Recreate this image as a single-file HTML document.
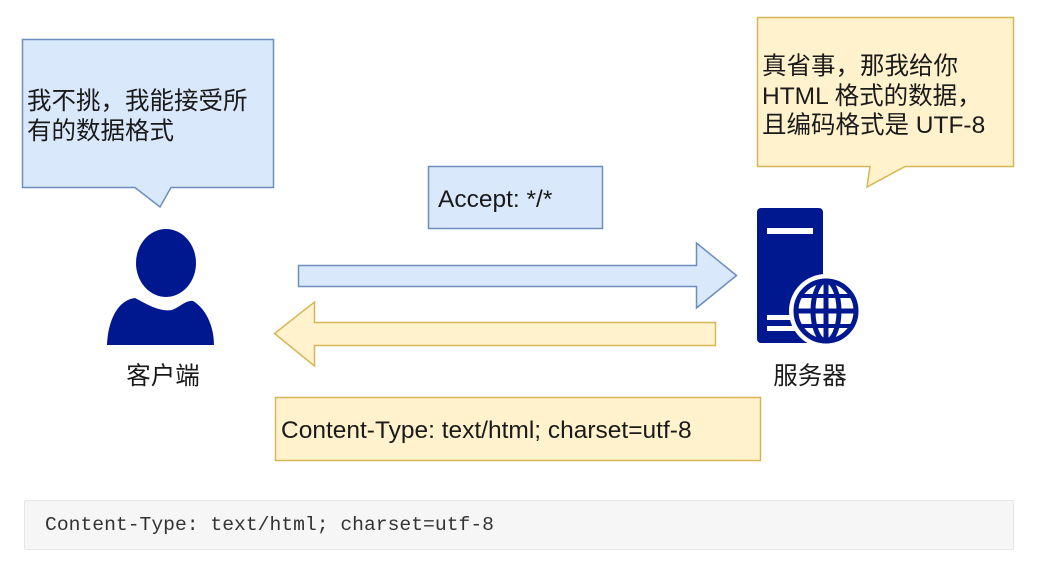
<!DOCTYPE html>
<html><head><meta charset="utf-8"><style>
html,body{margin:0;padding:0;background:#fff;width:1061px;height:569px;overflow:hidden}
svg{position:absolute;left:0;top:0}
.t{font-family:"Liberation Sans","Noto Sans CJK SC",sans-serif;fill:#1a1a1a}
.code{position:absolute;left:24px;top:500px;width:990px;height:50px;background:#f6f6f6;border:1px solid #e6e6e6;box-sizing:border-box;border-radius:2px}
.code span{position:absolute;left:20px;top:13px;font-family:"Liberation Mono",monospace;font-size:19.7px;color:#333;white-space:pre}
</style></head><body>
<svg width="1061" height="569" viewBox="0 0 1061 569">
<path d="M22.5 39.5H273.5V187.5H171L160 207L135 187.5H22.5Z" fill="#dae8fc" stroke="#6c8ebf" stroke-width="1.5"/>
<text class="t" x="27" y="109" font-size="24.5">我不挑，我能接受所</text>
<text class="t" x="27" y="139" font-size="24.5">有的数据格式</text>
<path d="M757.5 17.5H1013.5V166.5H905L867 187L870 166.5H757.5Z" fill="#fff2cc" stroke="#d6b656" stroke-width="1.5"/>
<text class="t" x="762" y="74" font-size="24.5">真省事，那我给你</text>
<text class="t" x="762" y="104" font-size="24.5">HTML 格式的数据，</text>
<text class="t" x="762" y="133" font-size="24.5">且编码格式是 UTF-8</text>
<rect x="428.5" y="166.5" width="174" height="62" fill="#dae8fc" stroke="#6c8ebf" stroke-width="1.5"/>
<text class="t" x="438" y="207" font-size="24.5">Accept: */*</text>
<path d="M298.5 265.5H696.5V243L736.5 275.5L696.5 308V286.5H298.5Z" fill="#dae8fc" stroke="#6c8ebf" stroke-width="1.5"/>
<path d="M715.5 322.5H314.5V302L274.5 333.5L314.5 366V345.5H715.5Z" fill="#fff2cc" stroke="#d6b656" stroke-width="1.5"/>
<rect x="275.5" y="397.5" width="485" height="63" fill="#fff2cc" stroke="#d6b656" stroke-width="1.5"/>
<text class="t" x="281" y="438" font-size="24.5">Content-Type: text/html; charset=utf-8</text>
<ellipse cx="166" cy="263" rx="30" ry="34" fill="#00188f"/>
<path d="M107 345C108 320 118 300 135 298C148 305 160 312 172 310C180 307 186 300 193 301C205 308 214 325 214 345Z" fill="#00188f"/>
<text class="t" x="163" y="384" font-size="24.5" text-anchor="middle" fill="#333">客户端</text>
<rect x="757" y="208" width="66" height="135" rx="4" fill="#00188f"/>
<rect x="767" y="228" width="46" height="6" fill="#fff"/>
<rect x="767" y="315" width="30" height="5" fill="#fff"/>
<rect x="767" y="326" width="30" height="5" fill="#fff"/>
<circle cx="826" cy="311" r="37" fill="#fff"/>
<circle cx="826" cy="311" r="30" fill="none" stroke="#00188f" stroke-width="5"/>
<ellipse cx="826" cy="311" rx="13" ry="30" fill="none" stroke="#00188f" stroke-width="5"/>
<line x1="826" y1="281" x2="826" y2="341" stroke="#00188f" stroke-width="5"/>
<line x1="796" y1="311" x2="856" y2="311" stroke="#00188f" stroke-width="5"/>
<line x1="801" y1="296" x2="851" y2="296" stroke="#00188f" stroke-width="4"/>
<line x1="801" y1="326" x2="851" y2="326" stroke="#00188f" stroke-width="4"/>
<text class="t" x="810" y="384" font-size="24.5" text-anchor="middle" fill="#333">服务器</text>
</svg>
<div class="code"><span>Content-Type: text/html; charset=utf-8</span></div>
</body></html>
